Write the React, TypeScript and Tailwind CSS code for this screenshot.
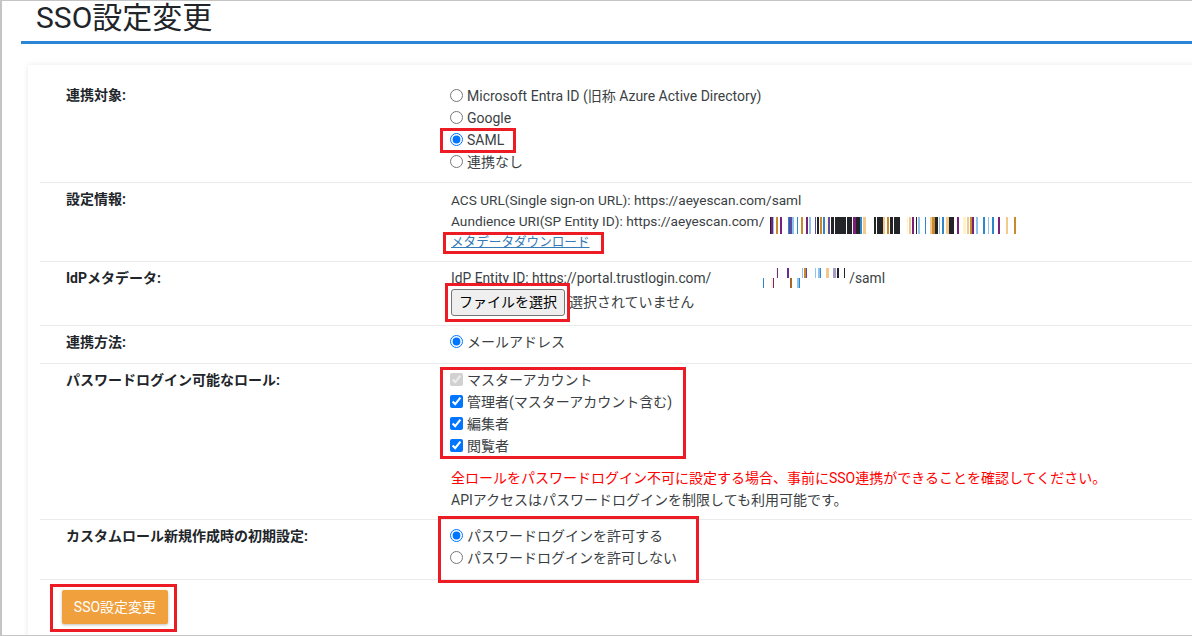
const font = { fontFamily: 'Roboto, "Noto Sans CJK JP", sans-serif' };

function Bars({ w, h, vw, bars }: { w: number; h: number; vw: number; bars: [number, number, string, number?, number?][] }) {
  return (
    <svg width={w} height={h} viewBox={`0 0 ${vw} ${h}`} preserveAspectRatio="none" className="block shrink-0" shapeRendering="crispEdges">
      {bars.map(([x, bw, c, y, bh], i) => (
        <rect key={i} x={x} y={y ?? 0} width={bw} height={bh ?? h} fill={c} />
      ))}
    </svg>
  );
}

const P = "#7a1f7a", K = "#222428", B = "#2f86c9", O = "#c98a2e", L = "#8cc4ee", T = "#f3c98b", U = "#5b4a9e", Y = "#fdf3cf";

const audience: [number, number, string][] = [
  [0, 1, K], [1, 2, P], [3, 1, L], [6, 2, O], [10, 2, P], [19, 1, B], [20, 3, U], [23, 2, L], [28, 1, B], [32, 2, O], [37, 2, P], [40, 2, L],
  [46, 2, U], [49, 2, K], [52, 2, O], [55, 2, B], [58, 2, Y], [60, 2, U], [63, 3, K], [67, 4, K], [71, 5, K], [76, 2, K], [79, 4, K], [83, 2, K], [86, 3, P], [89, 4, K], [93, 2, B], [96, 3, T],
  [107, 2, K], [110, 4, K], [114, 3, K], [117, 2, T], [121, 2, O], [124, 3, K], [128, 4, K], [132, 2, K],
  [141, 2, Y], [144, 2, T], [147, 2, P], [151, 1, K], [153, 2, L], [160, 1, B], [165, 2, T], [167, 3, O], [170, 3, K], [174, 2, L], [178, 2, B], [182, 3, T], [185, 4, K], [189, 1, K], [193, 2, P],
  [199, 3, Y], [203, 2, T], [206, 3, O], [209, 2, P], [213, 2, L], [220, 2, B], [225, 1, L], [229, 2, B], [235, 2, P], [238, 1, O], [244, 2, T], [252, 2, O],
];

const idp: [number, number, string, number, number][] = [
  [0, 1, B, 10, 10], [8, 2, Y, 10, 10], [10, 1, P, 10, 10], [27, 2, "#a5662a", 10, 10], [34, 2, L, 10, 10], [36, 1, B, 10, 10],
  [13, 1, Y, 0, 10], [14, 1, "#6a2a9a", 0, 10], [24, 2, "#6a2a9a", 0, 10], [39, 1, L, 0, 10], [41, 2, O, 0, 10], [43, 1, U, 0, 10],
  [52, 1, L, 0, 10], [55, 2, L, 0, 10], [57, 1, B, 0, 10], [63, 3, T, 0, 10], [70, 3, "#a89bc8", 0, 10], [74, 2, K, 0, 10], [81, 1, K, 0, 10],
];

function Row({ label, children }: { label: string; children: React.ReactNode }) {
  return (
    <div className="flex border-b border-[#ebebeb]">
      <div className="w-[411px] shrink-0 pl-[26px] pt-[5px] text-[14px] font-bold leading-[22px] text-[#212529]">{label}</div>
      <div className="min-w-0 flex-1 text-[14px] text-[#3b3f44]">{children}</div>
    </div>
  );
}

function Opt({ type = "radio", name, checked, disabled, label }: { type?: string; name?: string; checked?: boolean; disabled?: boolean; label: string }) {
  return (
    <label className="flex h-[22px] items-center whitespace-nowrap">
      <input type={type} name={name} defaultChecked={checked} disabled={disabled} className="m-0 mr-[3px] h-[13px] w-[13px] -translate-x-[1px] -translate-y-[1px]" />
      <span>{label}</span>
    </label>
  );
}

function Red({ className }: { className: string }) {
  return <div className={`pointer-events-none absolute border-[3px] border-[#ed1c24] ${className}`} />;
}

export default function App() {
  return (
    <div style={font} className="relative h-[636px] w-[1192px] overflow-hidden border-y border-l-2 border-[#c4c4c4] bg-white">
      <div className="ml-[19px]">
        <h1 className="h-[40px] pl-[15px] text-[30px] font-normal leading-[34px] text-[#212529]">SSO設定変更</h1>
        <div className="h-[3px] bg-[#2a85d6]" />
      </div>
      <div className="ml-[26px] mt-[21px] w-[1300px] bg-white pb-[30px] pl-[12px] pt-[14px] shadow-[0_0_6px_rgba(0,0,0,0.09)]">
        <Row label="連携対象:">
          <div className="pb-[9px] pt-[6px]">
            <Opt name="a" label="Microsoft Entra ID (旧称 Azure Active Directory)" />
            <Opt name="a" label="Google" />
            <Opt name="a" checked label="SAML" />
            <Opt name="a" label="連携なし" />
          </div>
        </Row>
        <Row label="設定情報:">
          <div className="pb-[6px] pt-[6px] leading-[22px]">
            <div className="h-[22px] text-[13.65px]">ACS URL(Single sign-on URL): https://aeyescan.com/saml</div>
            <div className="flex h-[22px] items-center whitespace-nowrap text-[13.7px] leading-[20px]">
              <span className="-mt-[2px]">Aundience URI(SP Entity ID): https://aeyescan.com/</span>
              <span className="ml-[6px] mt-[6px] flex"><Bars w={246} h={17} vw={254} bars={audience} /></span>
            </div>
            <a href="#" className="block h-[22px] text-[12.6px] leading-[18px] text-[#337ab7] underline">メタデータダウンロード</a>
          </div>
        </Row>
        <Row label="IdPメタデータ:">
          <div className="pb-[9px] pt-[6px]">
            <div className="flex h-[20px] items-center whitespace-nowrap text-[13.8px]">
              IdP Entity ID: https://portal.trustlogin.com/
              <span className="ml-[52px]"><Bars w={83} h={20} vw={83} bars={idp} /></span>
              <span className="ml-[3px]">/saml</span>
            </div>
            <div className="mt-[1px] flex items-center whitespace-nowrap">
              <button className="h-[27px] w-[114px] rounded-[3px] border border-[#767676] bg-[#efefef] text-[14px] text-black">ファイルを選択</button>
              <span className="ml-[4px]">選択されていません</span>
            </div>
          </div>
        </Row>
        <Row label="連携方法:">
          <div className="pb-[10px] pt-[5px]">
            <Opt name="m" checked label="メールアドレス" />
          </div>
        </Row>
        <Row label="パスワードログイン可能なロール:">
          <div className="pb-[8px] pt-[5px]">
            <Opt type="checkbox" checked disabled label="マスターアカウント" />
            <Opt type="checkbox" checked label="管理者(マスターアカウント含む)" />
            <Opt type="checkbox" checked label="編集者" />
            <Opt type="checkbox" checked label="閲覧者" />
            <div className="mt-[10px] h-[22px] leading-[22px] text-[#ff0000]">全ロールをパスワードログイン不可に設定する場合、事前にSSO連携ができることを確認してください。</div>
            <div className="h-[22px] leading-[22px]">APIアクセスはパスワードログインを制限しても利用可能です。</div>
          </div>
        </Row>
        <Row label="カスタムロール新規作成時の初期設定:">
          <div className="pb-[10px] pt-[5px]">
            <Opt name="p" checked label="パスワードログインを許可する" />
            <Opt name="p" label="パスワードログインを許可しない" />
          </div>
        </Row>
        <div className="pl-[22px] pt-[10px]">
          <button className="h-[34px] w-[106px] rounded-[2px] bg-[#f0a03c] text-[14px] text-white shadow-[0_1px_3px_rgba(0,0,0,0.25)]">SSO設定変更</button>
        </div>
      </div>
      <Red className="left-[438px] top-[127px] h-[25px] w-[76px]" />
      <Red className="left-[441px] top-[231px] h-[22px] w-[161px]" />
      <Red className="left-[443px] top-[282px] h-[39px] w-[125px]" />
      <Red className="left-[438px] top-[366px] h-[92px] w-[246px]" />
      <Red className="left-[436px] top-[515px] h-[67px] w-[261px]" />
      <Red className="left-[48px] top-[583px] h-[48px] w-[127px]" />
    </div>
  );
}
